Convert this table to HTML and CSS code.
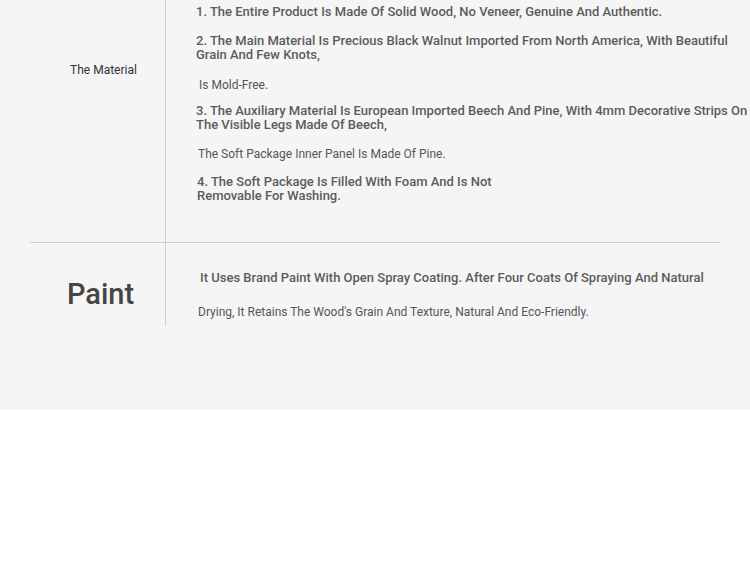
FILE: index.html
```
<!DOCTYPE html>
<html>
<head>
	<title>Specification</title>
	<link rel="stylesheet" href="styles.css">
</head>
<body>
	<div class="spec">
		<div class="spec-table">
			<div class="spec-row spec-row-material">
				<div class="spec-label">
					<span class="spec-label-text">The Material</span>
				</div>
				<div class="spec-body">
					<p class="spec-line">1. The Entire Product Is Made Of Solid Wood, No Veneer, Genuine And Authentic.</p>
					<p class="spec-line spec-line-walnut">2. The Main Material Is Precious Black Walnut Imported From North America, With Beautiful<br>Grain And Few Knots,</p>
					<p class="spec-note spec-note-mold">Is Mold-Free.</p>
					<p class="spec-line spec-line-beech">3. The Auxiliary Material Is European Imported Beech And Pine, With 4mm Decorative Strips On<br>The Visible Legs Made Of Beech,</p>
					<p class="spec-note spec-note-pine">The Soft Package Inner Panel Is Made Of Pine.</p>
					<p class="spec-line spec-line-foam">4. The Soft Package Is Filled With Foam And Is Not<br>Removable For Washing.</p>
				</div>
			</div>
			<div class="spec-row spec-row-paint">
				<div class="spec-label">
					<span class="spec-label-big">Paint</span>
				</div>
				<div class="spec-body spec-body-paint">
					<p class="spec-line spec-line-paint">It Uses Brand Paint With Open Spray Coating. After Four Coats Of Spraying And Natural</p>
					<p class="spec-note spec-note-drying">Drying, It Retains The Wood's Grain And Texture, Natural And Eco-Friendly.</p>
				</div>
			</div>
		</div>
	</div>
</body>
</html>
```
FILE: styles.css
```
   body {
	  margin: 0;
	  background: #fff;
	  font-family: Roboto, "Liberation Sans", sans-serif;
   }
   .spec {
	  height: 410px;
	  background: #f5f5f5;
	  overflow: hidden;
   }
   .spec-table {
	  margin: 0 30px;
   }
   .spec-row {
	  display: grid;
	  grid-template-columns: 136px 1fr;
   }
   .spec-row-material {
	  border-bottom: 1px solid #cfcfcf;
   }
   .spec-label {
	  display: flex;
	  justify-content: center;
	  align-items: flex-start;
	  border-right: 1px solid #cfcfcf;
   }
   .spec-row-material .spec-label {
	  padding: 62px 0 0 12px;
   }
   .spec-row-paint .spec-label {
	  padding: 34px 0 0 6px;
   }
   .spec-label-text {
	  font-size: 12px;
	  line-height: 16px;
	  color: #333;
   }
   .spec-label-big {
	  font-size: 29px;
	  line-height: 34px;
	  font-weight: 500;
	  color: #454545;
   }
   .spec-body {
	  display: flex;
	  flex-direction: column;
	  gap: 14px;
	  padding: 5px 0 39px 30px;
	  white-space: nowrap;
   }
   .spec-body-paint {
	  gap: 20px;
	  padding: 28px 0 7px 34px;
   }
   .spec-line {
	  margin: 0;
	  font-size: 13px;
	  line-height: 14px;
	  font-weight: 500;
	  color: #5c5c5c;
   }
   .spec-line-walnut {
	  margin-top: 1px;
   }
   .spec-line-beech {
	  margin-top: -2px;
   }
   .spec-note {
	  margin: 0;
	  font-size: 12px;
	  line-height: 14px;
	  color: #555;
   }
   .spec-note-mold {
	  padding-left: 3px;
	  margin-top: 2px;
   }
   .spec-note-pine {
	  padding-left: 2px;
	  margin-top: 1px;
   }
   .spec-line-foam {
	  padding-left: 1px;
   }
   .spec-note-drying {
	  margin-left: -2px;
   }
```
